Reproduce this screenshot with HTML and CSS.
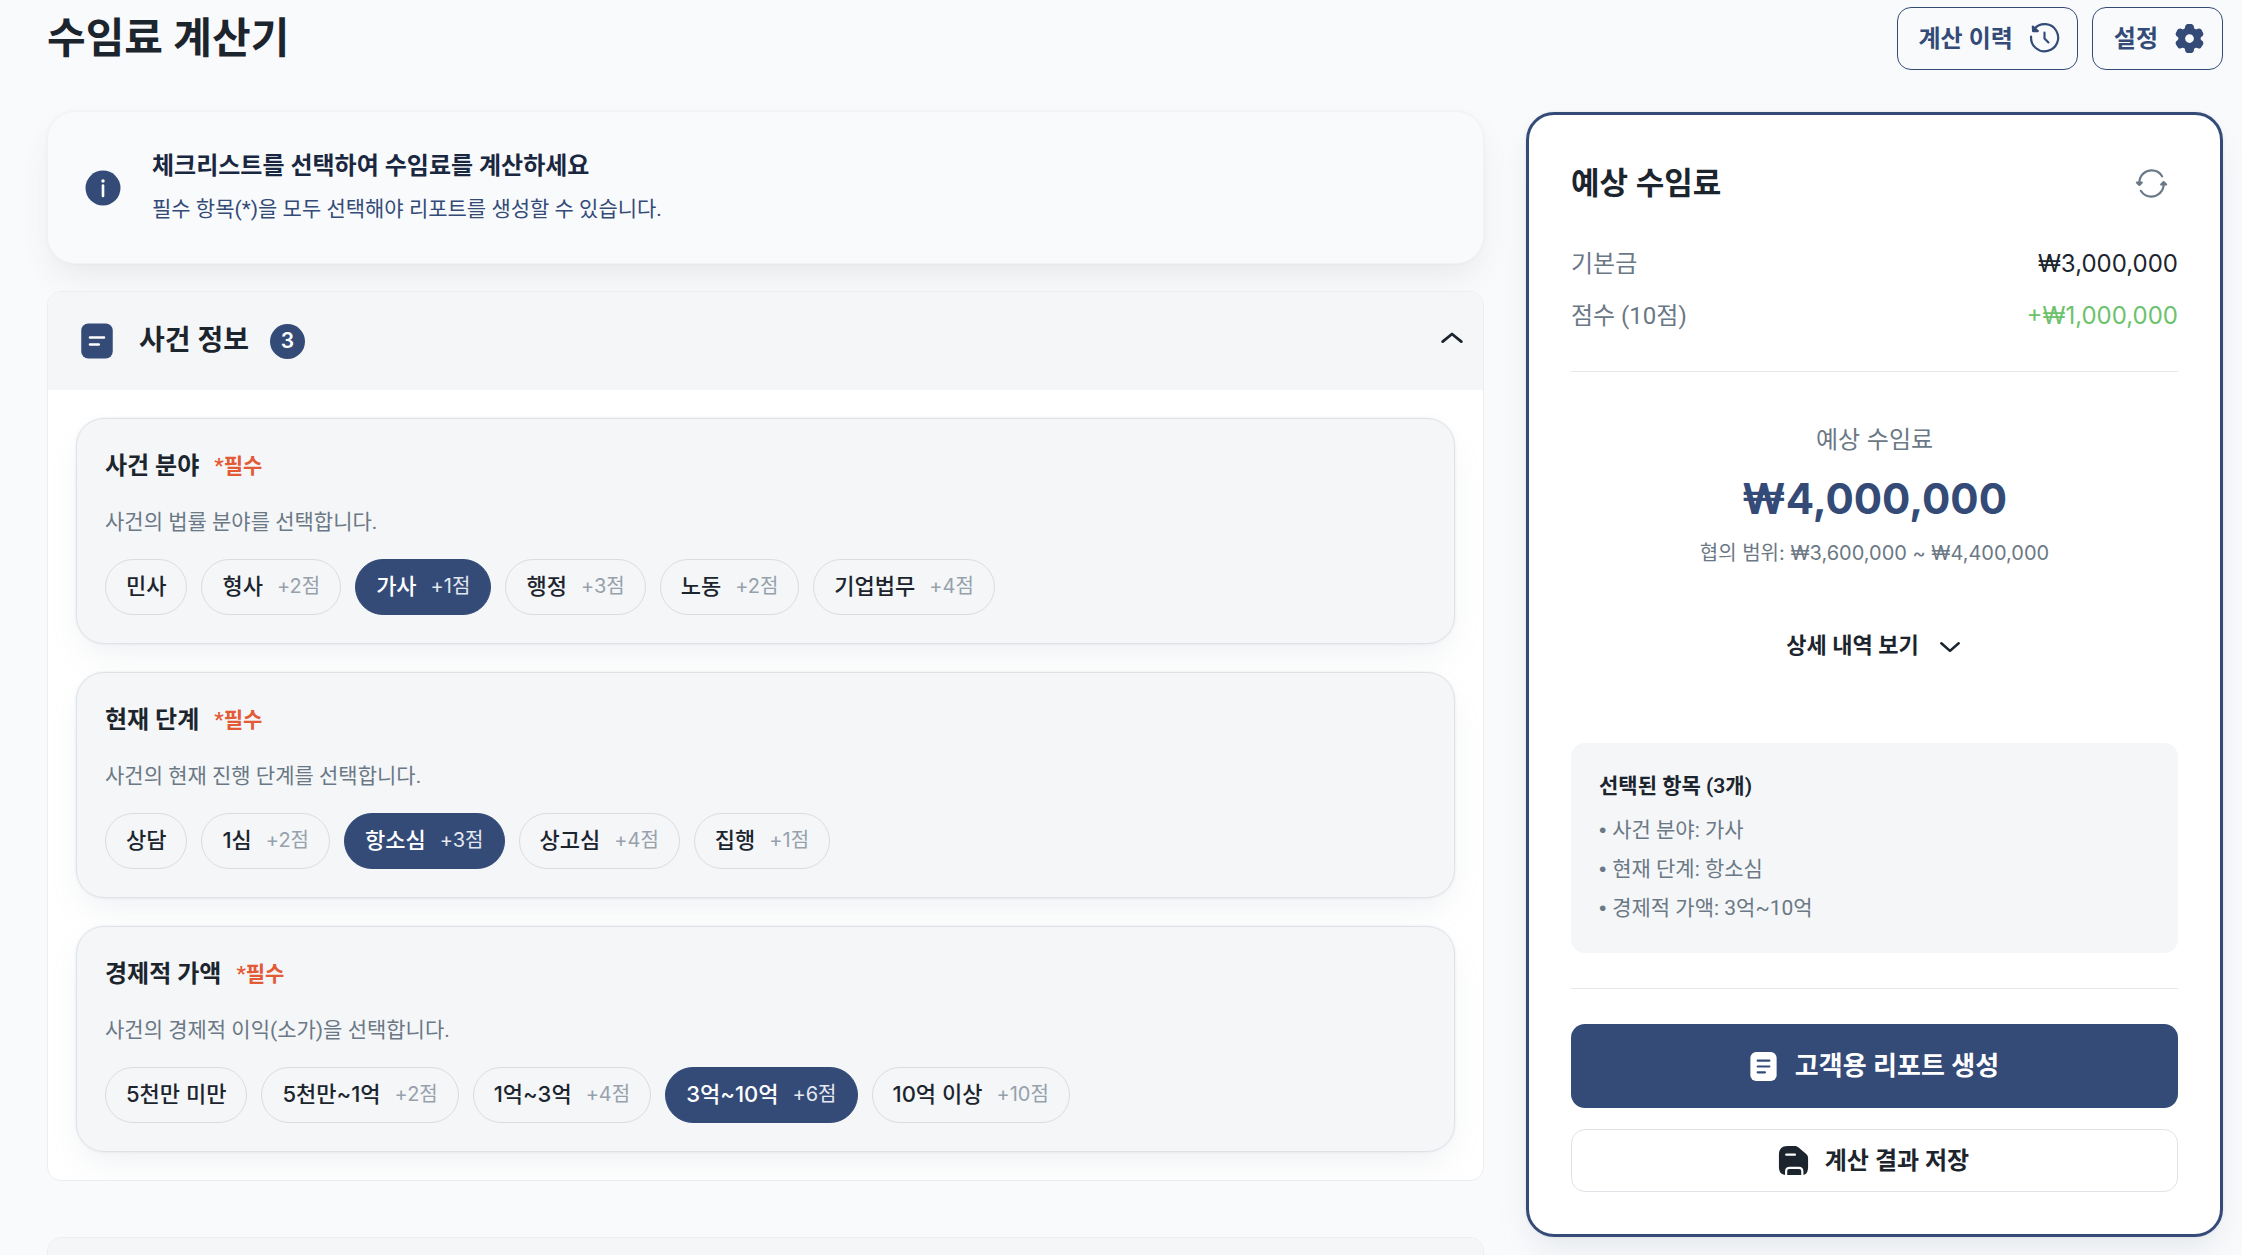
FILE: index.html
```html
<!DOCTYPE html>
<html lang="ko">
<head>
<meta charset="utf-8">
<title>수임료 계산기</title>
<link rel="stylesheet" href="styles.css">
</head>
<body>
<header class="topbar">
  <h1 class="page-title">수임료 계산기</h1>
  <div class="topbar-actions">
    <button type="button" class="btn btn-outline">계산 이력
      <svg class="icon" viewBox="0 0 24 24" fill="none" stroke="currentColor" stroke-width="1.5" stroke-linecap="round" stroke-linejoin="round"><path d="M5.100 5.300A9.300 9.300 0 1 1 2.800 10.700"/><path d="M4 3.800l.2 3.200 3.200-.1z" fill="currentColor"/><path d="M12 8v4l2.700 2.700"/></svg>
    </button>
    <button type="button" class="btn btn-outline">설정
      <svg class="icon" viewBox="0.5 0 24 24" fill="currentColor"><path fill-rule="evenodd" d="M14.279 2.152C13.909 2 13.439 2 12.500 2s-1.408 0-1.779.152a2.008 2.008 0 0 0-1.090 1.083c-.094.223-.13.484-.145.863a1.615 1.615 0 0 1-.796 1.353 1.640 1.640 0 0 1-1.579.008c-.338-.178-.583-.276-.825-.308a2.026 2.026 0 0 0-1.490.396c-.318.242-.553.646-1.022 1.453-.47.807-.704 1.210-.757 1.605-.07.526.074 1.058.4 1.479.148.192.357.353.68.555.477.297.783.803.783 1.361 0 .558-.306 1.064-.782 1.360-.324.203-.533.364-.682.556a1.990 1.990 0 0 0-.399 1.479c.053.394.287.798.757 1.605.47.807.704 1.210 1.022 1.453.424.323.96.465 1.490.396.242-.032.487-.13.825-.308a1.640 1.640 0 0 1 1.580.008c.486.280.774.795.795 1.353.015.380.051.640.145.863.204.490.596.880 1.090 1.083.37.152.84.152 1.779.152s1.409 0 1.779-.152a2.008 2.008 0 0 0 1.090-1.083c.094-.223.130-.483.145-.863.020-.558.309-1.074.796-1.353a1.640 1.640 0 0 1 1.579-.008c.338.178.583.276.825.308.530.070 1.066-.073 1.490-.396.318-.242.553-.646 1.022-1.453.470-.807.704-1.210.757-1.605a1.990 1.990 0 0 0-.400-1.479c-.148-.192-.357-.353-.680-.555-.477-.297-.783-.803-.783-1.361 0-.558.306-1.064.782-1.360.324-.203.533-.364.682-.556a1.990 1.990 0 0 0 .399-1.479c-.053-.394-.287-.798-.757-1.605-.470-.807-.704-1.210-1.022-1.453a2.026 2.026 0 0 0-1.490-.396c-.242.032-.487.130-.825.308a1.640 1.640 0 0 1-1.580-.008 1.615 1.615 0 0 1-.795-1.353c-.015-.380-.051-.640-.145-.863a2.007 2.007 0 0 0-1.090-1.083zM12.500 15c1.670 0 3.023-1.343 3.023-3s-1.354-3-3.023-3c-1.670 0-3.023 1.343-3.023 3s1.354 3 3.023 3z"/></svg>
    </button>
  </div>
</header>

<main class="layout">
  <div class="checklist">
    <section class="notice">
      <svg class="icon-lg navy" viewBox="0 0 24 24"><circle cx="12" cy="12" r="10" fill="currentColor"/><path d="M12 10.600v5.900" stroke="#fff" stroke-width="1.500" stroke-linecap="round"/><circle cx="12" cy="8" r="1" fill="#fff"/></svg>
      <div class="notice-text">
        <h2 class="notice-title">체크리스트를 선택하여 수임료를 계산하세요</h2>
        <p class="notice-desc">필수 항목(*)을 모두 선택해야 리포트를 생성할 수 있습니다.</p>
      </div>
    </section>

    <section class="group">
      <button type="button" class="group-head" aria-expanded="true">
        <svg class="icon-lg navy" viewBox="0 0 24 24"><rect x="3" y="2" width="18" height="20" rx="4" fill="currentColor"/><path d="M8 10h8M8 14h5" stroke="#fff" stroke-width="1.500" stroke-linecap="round"/></svg>
        <span class="group-title">사건 정보</span>
        <span class="count">3</span>
        <svg class="chevron" viewBox="0 0 24 24" fill="none" stroke="currentColor" stroke-width="2.400" stroke-linecap="round" stroke-linejoin="round"><path d="M4 12.500l8-6.500 8 6.500"/></svg>
      </button>
      <div class="group-body">
        <article class="question">
          <h3 class="question-title">사건 분야 <span class="required">*필수</span></h3>
          <p class="question-desc">사건의 법률 분야를 선택합니다.</p>
          <div class="chips">
            <button type="button" class="chip">민사</button>
            <button type="button" class="chip">형사 <span class="points">+2점</span></button>
            <button type="button" class="chip selected" aria-pressed="true">가사 <span class="points">+1점</span></button>
            <button type="button" class="chip">행정 <span class="points">+3점</span></button>
            <button type="button" class="chip">노동 <span class="points">+2점</span></button>
            <button type="button" class="chip">기업법무 <span class="points">+4점</span></button>
          </div>
        </article>
        <article class="question">
          <h3 class="question-title">현재 단계 <span class="required">*필수</span></h3>
          <p class="question-desc">사건의 현재 진행 단계를 선택합니다.</p>
          <div class="chips">
            <button type="button" class="chip">상담</button>
            <button type="button" class="chip">1심 <span class="points">+2점</span></button>
            <button type="button" class="chip selected" aria-pressed="true">항소심 <span class="points">+3점</span></button>
            <button type="button" class="chip">상고심 <span class="points">+4점</span></button>
            <button type="button" class="chip">집행 <span class="points">+1점</span></button>
          </div>
        </article>
        <article class="question">
          <h3 class="question-title">경제적 가액 <span class="required">*필수</span></h3>
          <p class="question-desc">사건의 경제적 이익(소가)을 선택합니다.</p>
          <div class="chips">
            <button type="button" class="chip">5천만 미만</button>
            <button type="button" class="chip">5천만~1억 <span class="points">+2점</span></button>
            <button type="button" class="chip">1억~3억 <span class="points">+4점</span></button>
            <button type="button" class="chip selected" aria-pressed="true">3억~10억 <span class="points">+6점</span></button>
            <button type="button" class="chip">10억 이상 <span class="points">+10점</span></button>
          </div>
        </article>
      </div>
    </section>

    <section class="group group-next">
      <div class="group-head"></div>
    </section>
  </div>

  <aside class="summary">
    <div class="summary-head">
      <h2 class="summary-title">예상 수임료</h2>
      <button type="button" class="icon-btn" aria-label="초기화">
        <svg class="icon" viewBox="0 0 24 24" fill="currentColor"><path d="M12.079 2.250c-4.794 0-8.734 3.663-9.118 8.333H2a.75.75 0 0 0-.528 1.283l1.680 1.666a.75.75 0 0 0 1.056 0l1.680-1.666a.75.75 0 0 0-.528-1.283h-.893c.380-3.831 3.638-6.833 7.612-6.833a7.660 7.660 0 0 1 6.537 3.643.75.75 0 1 0 1.277-.786A9.160 9.160 0 0 0 12.079 2.250z"/><path d="M20.841 10.467a.75.75 0 0 0-1.054 0L18.100 12.133a.75.75 0 0 0 .527 1.284h.899c-.382 3.830-3.651 6.833-7.644 6.833a7.700 7.700 0 0 1-6.565-3.644.75.75 0 1 0-1.277.788 9.200 9.200 0 0 0 7.842 4.356c4.808 0 8.765-3.660 9.151-8.333H22a.75.75 0 0 0 .527-1.284z"/></svg>
      </button>
    </div>
    <dl class="lines">
      <div class="line"><dt>기본금</dt><dd>₩3,000,000</dd></div>
      <div class="line"><dt>점수 (10점)</dt><dd class="plus">+₩1,000,000</dd></div>
    </dl>
    <hr class="rule">
    <div class="total">
      <p class="total-label">예상 수임료</p>
      <p class="total-value">₩4,000,000</p>
      <p class="total-range">협의 범위: ₩3,600,000 ~ ₩4,400,000</p>
    </div>
    <button type="button" class="details">상세 내역 보기
      <svg class="details-icon" viewBox="0 0 24 24" fill="none" stroke="currentColor" stroke-width="2.400" stroke-linecap="round" stroke-linejoin="round"><path d="M4 9.500l8 7 8-7"/></svg>
    </button>
    <div class="picked">
      <h3 class="picked-title">선택된 항목 (3개)</h3>
      <p><span class="bullet">• </span>사건 분야: 가사</p>
      <p><span class="bullet">• </span>현재 단계: 항소심</p>
      <p><span class="bullet">• </span>경제적 가액: 3억~10억</p>
    </div>
    <hr class="rule">
    <div class="actions">
      <button type="button" class="btn btn-primary">
        <svg class="icon" viewBox="0 0 24 24"><rect x="3" y="2" width="18" height="20" rx="4" fill="currentColor"/><path d="M8 8h8M8 12h8M8 16h5" stroke="#344b78" stroke-width="1.500" stroke-linecap="round"/></svg>
        고객용 리포트 생성</button>
      <button type="button" class="btn btn-plain">
        <svg class="icon" viewBox="0 0 24 24"><path d="M8 2h4.500c1.500 0 2.200.300 3.200 1.200l4.800 4.200C21.600 8.400 22 9.200 22 10.600V16c0 3.500-.8 5.400-3.200 5.900V19.500c0-2.200-1-3.200-3.100-3.200H9.300c-2.100 0-3.100 1-3.100 3.200v2.400C3.200 21.500 2 19.800 2 16V8c0-4 2-6 6-6z" fill="currentColor"/><path d="M7.700 22v-2.500c0-1.200.5-1.700 1.600-1.700h6.400c1.100 0 1.600.5 1.600 1.700V22z" fill="currentColor"/><path d="M7 8h6" stroke="#fff" stroke-width="1.500" stroke-linecap="round"/></svg>
        계산 결과 저장</button>
    </div>
  </aside>
</main>
</body>
</html>
```
FILE: styles.css
```css
* { box-sizing: border-box; }
html { scrollbar-width: none; }
body {
  margin: 0;
  padding: 7px 19px 0 47px;
  background: #f9fafc;
  color: #1c252e;
  font-family: Roboto, "Noto Sans CJK KR", sans-serif;
  font-size: 21px;
  line-height: 30px;
}
h1, h2, h3, p, dl, dd { margin: 0; }
button { font: inherit; color: inherit; cursor: pointer; }
.icon { width: 35px; height: 35px; flex: none; }
.icon-lg { width: 42px; height: 42px; flex: none; }
.navy { color: #344b78; }

.topbar { display: flex; justify-content: space-between; align-items: flex-start; height: 64px; }
.page-title { font-size: 42px; line-height: 64px; font-weight: 700; }
.topbar-actions { display: flex; gap: 14px; }
.btn {
  display: flex; align-items: center; justify-content: center; gap: 14px;
  border-radius: 14px; font-weight: 700;
}
.btn-outline {
  height: 63px; padding: 0 15px 0 21px; border: 1px solid #344b78;
  background: transparent; color: #344b78; font-size: 24px;
}

.layout {
  display: grid; grid-template-columns: minmax(0, 1437px) minmax(0, 697px);
  justify-content: space-between; align-items: start; padding-top: 40px;
}
.notice {
  display: flex; align-items: center; gap: 28px; min-height: 153px; padding: 0 34px;
  border: 1px solid #f2f3f5; border-radius: 28px; background: #f9fafc;
  box-shadow: 0 0 3px rgba(145, 158, 171, .1), 0 16px 32px -6px rgba(80, 80, 80, .1);
}
.notice-title { font-size: 24px; line-height: 36px; font-weight: 700; color: #1a2740; }
.notice-desc { padding: 8px 0 2px; line-height: 34px; color: #344b78; }

.group { position: relative; margin-top: 27px; border: 1px solid #ebedf0; border-radius: 14px; background: #fff; overflow: hidden; }
.group-next { margin-top: 56px; }
.group-head {
  display: flex; align-items: center; width: 100%; height: 98px; padding: 0 17px 0 28px;
  border: 0; background: #f4f6f8; text-align: left;
}
.group-title { margin-left: 21px; font-size: 28px; font-weight: 600; }
.count {
  display: grid; place-items: center; width: 35px; height: 35px; margin-left: 21px;
  border-radius: 50%; background: #344b78; color: #fff; font-family: Inter, sans-serif; font-weight: 600;
}
.chevron { width: 28px; height: 28px; margin-left: auto; }
.group-body { display: grid; gap: 28px; padding: 28px; }
.question {
  padding: 29px 28px 28px; border: 1px solid #dfe3e8; border-radius: 28px; background: #f4f6f8;
  box-shadow: 0 0 3px rgba(145, 158, 171, .2), 0 16px 32px -6px rgba(145, 158, 171, .14);
}
.question-title { display: flex; align-items: center; gap: 15px; font-size: 24px; line-height: 36px; font-weight: 700; }
.required { font-size: 21px; font-weight: 600; color: #e35a36; }
.question-desc { padding-top: 23px; color: #6b7885; }
.chips { display: flex; flex-wrap: wrap; gap: 14px; padding-top: 22px; }
.chip {
  display: flex; align-items: center; gap: 14px; height: 56px; padding: 0 20px 2px;
  border: 1px solid #d9dde1; border-radius: 28px; background: transparent;
  font-family: Inter, "Noto Sans CJK KR", sans-serif; font-size: 22px; font-weight: 500;
}
.points { font-size: 20px; font-weight: 400; color: #97a1ac; }
.selected { border-color: #344b78; background: #344b78; color: #fff; }
.selected .points { color: #e4e8f0; }

.summary {
  margin-top: 1px; padding: 42px; border: 3px solid #344b78; border-radius: 28px; background: #fff;
  box-shadow: 0 0 3px rgba(145, 158, 171, .2), 0 16px 32px -6px rgba(145, 158, 171, .2);
}
.summary-head { display: flex; justify-content: space-between; align-items: center; }
.summary-title { font-size: 31px; line-height: 52px; font-weight: 700; }
.icon-btn { display: flex; padding: 9px; border: 0; background: none; color: #6b7885; }
.lines { display: grid; gap: 16px; padding: 36px 0 37px; font-size: 24px; line-height: 36px; }
.line { display: flex; justify-content: space-between; }
.line dt { color: #6b7885; }
.line dd { font-family: Inter, "Noto Sans CJK KR", sans-serif; }
.line .plus { color: #6cc26c; }
.rule { width: 100%; height: 0; margin: 0; border: 0; border-top: 1px solid #e7eaed; }
.total { padding-top: 50px; text-align: center; color: #6b7885; font-family: Inter, "Noto Sans CJK KR", sans-serif; }
.total-label { font-size: 24px; line-height: 36px; }
.total-value { padding-top: 7px; font-size: 42px; line-height: 68px; font-weight: 700; color: #344b78; }
.total-range { padding-top: 3px; font-size: 20px; line-height: 34px; }
.details {
  display: flex; align-items: center; justify-content: center; gap: 18px; width: 100%; height: 52px; margin: 50px 0 71px;
  border: 0; background: none; font-size: 22px; font-weight: 700;
}
.details-icon { width: 26px; height: 26px; }
.picked { margin-bottom: 35px; padding: 28px 28px 25px; border-radius: 14px; background: #f4f6f8; color: #6b7885; line-height: 39px; }
.picked-title { padding-bottom: 10px; font-size: 21px; line-height: 30px; font-weight: 600; color: #1c252e; }
.bullet { font-family: "Liberation Sans", sans-serif; line-height: 1; }
.actions { display: grid; gap: 21px; padding-top: 35px; }
.btn-primary { height: 84px; padding: 0 10px 0 6px; border: 0; background: #344b78; color: #fff; font-size: 26px; }
.btn-plain { height: 63px; padding: 0 10px 0 6px; border: 1px solid #dfe3e8; background: #fff; font-size: 24px; font-weight: 600; }
```
